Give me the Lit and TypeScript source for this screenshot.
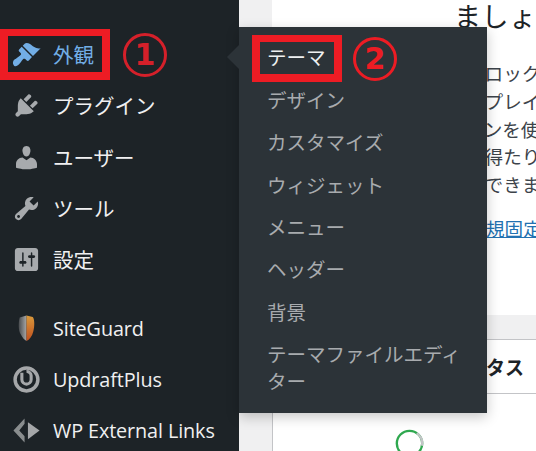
import { LitElement, html, css, svg } from "lit";
import { customElement } from "lit/decorators.js";

const ICONS: Record<string, string> = {
  brush: "M14.48 11.06L7.41 3.99l1.5-1.5c.5-.56 2.3-.47 3.51.32 1.21.8 1.43 1.28 2.91 2.1 1.18.64 2.45 1.26 4.45.85zm-.71.71L6.7 4.7 4.93 6.47c-.39.39-.39 1.02 0 1.41l1.06 1.06c.39.39.39 1.03 0 1.42-.6.6-1.43 1.11-2.21 1.69-.35.26-.7.53-1.01.84C1.43 13.23 0 15 1.02 17.11c1.03 2.05 2.82.61 4.16-.72.31-.31.58-.66.85-1.02.57-.78 1.08-1.61 1.69-2.21.39-.39 1.02-.39 1.41 0l1.06 1.06c.39.39 1.02.39 1.41 0z",
  plugin: "M13.11 4.36L9.87 7.6 8 5.73l3.24-3.24c.35-.34 1.05-.2 1.56.32.52.51.66 1.21.31 1.55zm-8 1.77l.91-1.12 9.01 9.01-1.19.84c-.71.71-2.63 1.16-3.82 1.16H6.14L4.9 17.26c-.59.59-1.54.59-2.12 0-.59-.58-.59-1.53 0-2.12l1.24-1.24v-3.88c0-1.13.4-3.19 1.09-3.89zm7.26 3.97l3.24-3.24c.34-.35 1.04-.21 1.55.31.52.51.66 1.21.31 1.55l-3.24 3.25z",
  user: "M10 9.25c-2.27 0-2.73-3.44-2.73-3.44C7 4.02 7.82 2 9.97 2c2.16 0 2.98 2.02 2.71 3.81 0 0-.41 3.44-2.68 3.44zm0 2.57L12.72 10c2.39 0 4.52 2.33 4.52 4.53v2.49s-3.65 1.13-7.24 1.13c-3.65 0-7.24-1.13-7.24-1.13v-2.49c0-2.25 1.94-4.48 4.47-4.48z",
  tool: "M16.68 9.77c-1.34 1.34-3.3 1.67-4.95.99l-5.41 6.52c-.99.99-2.59.99-3.58 0s-.99-2.59 0-3.57l6.52-5.42c-.68-1.65-.35-3.61.99-4.95 1.28-1.28 3.12-1.62 4.72-1.06l-2.89 2.89 2.82 2.82 2.86-2.87c.53 1.58.18 3.39-1.08 4.65zM3.81 16.21c.4.39 1.04.39 1.43 0 .4-.4.4-1.04 0-1.43-.39-.4-1.03-.4-1.43 0-.39.39-.39 1.03 0 1.43z",
  settings: "M18 16V4c0-1.1-.9-2-2-2H4c-1.1 0-2 .9-2 2v12c0 1.1.9 2 2 2h12c1.1 0 2-.9 2-2zM8 11h1c.55 0 1 .45 1 1s-.45 1-1 1H8v1.5c0 .28-.22.5-.5.5s-.5-.22-.5-.5V13H6c-.55 0-1-.45-1-1s.45-1 1-1h1V5.5c0-.28.22-.5.5-.5s.5.22.5.5V11zm5-2h-1c-.55 0-1-.45-1-1s.45-1 1-1h1V5.5c0-.28.22-.5.5-.5s.5.22.5.5V7h1c.55 0 1 .45 1 1s-.45 1-1 1h-1v5.5c0 .28-.22.5-.5.5s-.5-.22-.5-.5V9z",
};

const dash = (k: string) => html`<svg class="ic" viewBox="0 0 20 20" fill="currentColor"><path d=${ICONS[k]}></path></svg>`;

const shield = html`<svg class="ic" viewBox="0 0 30 30">
  <defs>
    <linearGradient id="gl" x1="0" x2="1" y1="0" y2="0"><stop offset="0" stop-color="#4a4d50"/><stop offset="1" stop-color="#a5a6a7"/></linearGradient>
    <linearGradient id="gr" x1="0" x2="0" y1="0" y2="1"><stop offset="0" stop-color="#d99a3c"/><stop offset="1" stop-color="#c04f1e"/></linearGradient>
  </defs>
  <path d="M15 1.5 L8 3.5 C6.5 9 6.5 17 9 21 C11 25 13 27 15 28 Z" fill="url(#gl)"/>
  <path d="M15 1.5 L21.5 3 C23.5 5 23.5 13 22 18 C21 23 18 26.5 15 28 Z" fill="url(#gr)"/>
</svg>`;

const updraft = html`<svg class="ic" viewBox="0 0 30 30">
  <circle cx="15" cy="15" r="11.8" fill="none" stroke="#a5a7a9" stroke-width="3.6"/>
  <path d="M10.2 8 L10.2 15 A4.8 4.8 0 0 0 19.8 15 L19.8 11 A4.5 4.5 0 0 0 15 6.8" fill="none" stroke="#a5a7a9" stroke-width="3.2"/>
</svg>`;

const extlinks = html`<svg class="ic" viewBox="0 0 30 30" fill="#a5a7a9">
  <path d="M13 2.5 L13 8 L7.5 15 L13 21 L13 27.5 L1.5 15 Z" opacity=".8"/>
  <path d="M16.5 6.5 L28.5 15 L16.5 24 Z"/>
</svg>`;

const FLY = ["テーマ", "デザイン", "カスタマイズ", "ウィジェット", "メニュー", "ヘッダー", "背景", "テーマファイルエディター"];
const LINES = ["ブロック", "スプレイ", "ーンを使", "を得たり", "ができま"];

@customElement("app-root")
export class AppRoot extends LitElement {
  static styles = css`
    :host {
      display: block;
      position: relative;
      width: 536px;
      height: 451px;
      overflow: hidden;
      background: #f0f0f1;
      font-family: "Noto Sans CJK JP", "Noto Sans", sans-serif;
    }
    .page { display: flex; height: 451px; }
    .side {
      flex: 0 0 239px;
      background: #1d2327;
      padding-top: 29px;
      box-sizing: border-box;
      display: flex;
      flex-direction: column;
    }
    .item {
      display: flex;
      align-items: center;
      flex: 0 0 51.3px;
      color: #f0f0f1;
      font-size: 20.5px;
      line-height: 27px;
    }
    .item.cur, .item.cur .box { color: #72aee6; }
    .item.latin { font-family: "Open Sans", sans-serif; font-size: 19.8px; letter-spacing: -0.1px; }
    .box { flex: 0 0 53px; display: flex; justify-content: center; color: #a7aaad; }
    .ic { width: 29px; height: 29px; display: block; margin-left: -1px; }
    .sep { flex: 0 0 17px; }
    .main { flex: 1; min-width: 0; padding-left: 33px; display: flex; flex-direction: column; }
    .top { flex: 0 0 315px; background: #fff; overflow: hidden; color: #1d2327; }
    .h { white-space: nowrap; font-size: 27px; line-height: 36px; margin: -2px 0 0 182px; letter-spacing: 0.5px; }
    .lines { margin: 25px 0 0 194px; font-size: 18.6px; line-height: 27.8px; white-space: nowrap; color: #3c434a; }
    .link { margin: 16px 0 0 214px; font-size: 18.6px; line-height: 27px; white-space: nowrap; color: #2271b1; text-decoration: underline; }
    .band { flex: 0 0 24px; }
    .card { flex: 1; background: #fff; border-top: 1px solid #c3c4c7; border-left: 1px solid #c3c4c7; }
    .card-h { height: 54px; box-sizing: border-box; border-bottom: 1px solid #c3c4c7; font-size: 19px; font-weight: 700; line-height: 54px; color: #1d2327; padding-left: 213px; white-space: nowrap; }
    .ring { display: block; margin: 35px 0 0 122px; width: 29px; height: 29px; }

    .fly {
      position: absolute;
      left: 239px;
      top: 27px;
      width: 248px;
      height: 386px;
      box-sizing: border-box;
      background: #2c3338;
      padding: 8.8px 25px 0 28px;
      box-shadow: 0 4px 12px rgba(0, 0, 0, 0.22);
    }
    .fly::before {
      content: "";
      position: absolute;
      left: -12px;
      top: 18px;
      border-style: solid;
      border-width: 12px 12px 12px 0;
      border-color: transparent #2c3338 transparent transparent;
    }
    .fi { padding: 7.7px 0; font-size: 19.5px; line-height: 27px; color: #a8abae; }
    .fi.on { color: #eef0f1; }

    .mark { position: absolute; box-sizing: border-box; border: 8px solid #ed1c24; border-top-width: 7px; }
    .m1 { left: 0; top: 29px; width: 110px; height: 51px; }
    .m2 { left: 252px; top: 35px; width: 90px; height: 47px; }
    .num {
      position: absolute;
      box-sizing: border-box;
      width: 44px;
      height: 44px;
      border: 3px solid #ed1c24;
      border-radius: 50%;
      color: #ed1c24;
      display: flex;
      align-items: center;
      justify-content: center;
      font: 700 30px/1 "DejaVu Sans", sans-serif;
    }
    .n1 { left: 123px; top: 33px; border-color: #d5202a; color: #d5202a; }
    .n2 { left: 353px; top: 37px; }
  `;

  render() {
    return html`
      <div class="page">
        <nav class="side">
          <div class="item cur"><span class="box">${dash("brush")}</span>外観</div>
          <div class="item"><span class="box">${dash("plugin")}</span>プラグイン</div>
          <div class="item"><span class="box">${dash("user")}</span>ユーザー</div>
          <div class="item"><span class="box">${dash("tool")}</span>ツール</div>
          <div class="item"><span class="box">${dash("settings")}</span>設定</div>
          <div class="sep"></div>
          <div class="item latin"><span class="box">${shield}</span>SiteGuard</div>
          <div class="item latin"><span class="box">${updraft}</span>UpdraftPlus</div>
          <div class="item latin"><span class="box">${extlinks}</span>WP External Links</div>
        </nav>
        <main class="main">
          <section class="top">
            <div class="h">ましょ</div>
            <div class="lines">${LINES.map((l) => html`<div>${l}</div>`)}</div>
            <div class="link">規固定</div>
          </section>
          <div class="band"></div>
          <section class="card">
            <div class="card-h">タス</div>
            <svg class="ring" viewBox="0 0 32 32" fill="none" stroke-width="2.6">
              ${svg`<circle cx="16" cy="16" r="14" stroke="#2fa84f"></circle>
              <path d="M24.03 4.53 A14 14 0 0 1 29.79 18.43" stroke="#c3c4c7"></path>`}
            </svg>
          </section>
        </main>
      </div>
      <div class="fly">
        ${FLY.map((f, i) => html`<div class="fi ${i === 0 ? "on" : ""}">${f}</div>`)}
      </div>
      <div class="mark m1"></div>
      <div class="mark m2"></div>
      <div class="num n1">1</div>
      <div class="num n2">2</div>
    `;
  }
}
